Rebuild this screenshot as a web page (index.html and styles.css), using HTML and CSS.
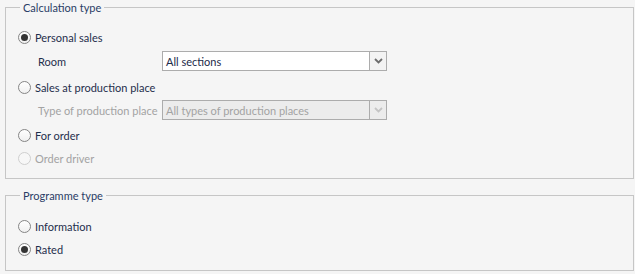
FILE: index.html
```html
<!DOCTYPE html>
<html lang="en">
<head>
    <meta charset="UTF-8">
    <title>Calculation settings</title>
    <link rel="stylesheet" href="styles.css">
</head>
<body>

    <fieldset class="group group-calc">
        <legend>Calculation type</legend>

        <div class="row radio-row">
            <span class="radio checked"></span>
            <span class="label">Personal sales</span>
        </div>
        <div class="row sub-row room-row">
            <span class="sub-label">Room</span>
            <div class="combo">
                <span class="combo-text">All sections</span>
                <span class="combo-btn"><svg width="9" height="6" viewBox="0 0 9 6"><path d="M1 1 L4.5 4.5 L8 1" fill="none" stroke="#6d6d6d" stroke-width="1.8"/></svg></span>
            </div>
        </div>
        <div class="row radio-row">
            <span class="radio"></span>
            <span class="label">Sales at production place</span>
        </div>
        <div class="row sub-row place-row">
            <span class="sub-label disabled">Type of production place</span>
            <div class="combo combo-disabled">
                <span class="combo-text">All types of production places</span>
                <span class="combo-btn"><svg width="9" height="6" viewBox="0 0 9 6"><path d="M1 1 L4.5 4.5 L8 1" fill="none" stroke="#c4c4c4" stroke-width="1.8"/></svg></span>
            </div>
        </div>
        <div class="row radio-row">
            <span class="radio"></span>
            <span class="label">For order</span>
        </div>
        <div class="row radio-row">
            <span class="radio radio-disabled"></span>
            <span class="label disabled">Order driver</span>
        </div>
    </fieldset>

    <fieldset class="group group-prog">
        <legend>Programme type</legend>

        <div class="row radio-row">
            <span class="radio"></span>
            <span class="label">Information</span>
        </div>
        <div class="row radio-row">
            <span class="radio checked"></span>
            <span class="label">Rated</span>
        </div>
    </fieldset>

</body>
</html>
```

FILE: styles.css
```css
body {
    margin: 0;
    padding: 0 1px 0 5px;
    background-color: #f5f5f5;
    font-family: Lato, 'Noto Sans', sans-serif;
    font-size: 11px;
    color: #1f2e4c;
}

.group {
    margin: 0;
    border: 1px solid #c6c6c6;
    padding: 0 0 0 12px;
    display: flex;
    flex-direction: column;
}

.group legend {
    margin-left: 2px;
    padding: 0 3px;
    line-height: 15px;
    color: #2a3d66;
}

.group-calc {
    height: 179px;
    box-sizing: border-box;
    padding-top: 12px;
}

.group-prog {
    margin-top: 9px;
    height: 83px;
    box-sizing: border-box;
    padding-top: 13px;
}

.row {
    display: flex;
    align-items: center;
    white-space: nowrap;
}

.radio-row {
    height: 20px;
    margin-bottom: 3px;
}

.sub-row {
    height: 20px;
    padding-left: 20px;
}

/* the rows in the original dialog aren't evenly spaced */
.room-row {
    margin-top: 1px;
    margin-bottom: 6px;
}

.place-row {
    margin-bottom: 5px;
}

.radio {
    width: 11px;
    height: 11px;
    border: 1px solid #858585;
    border-radius: 50%;
    background: linear-gradient(#ffffff, #f0f0f0);
    position: relative;
    flex: none;
}

.radio.checked::after {
    content: "";
    position: absolute;
    left: 2px;
    top: 2px;
    width: 7px;
    height: 7px;
    border-radius: 50%;
    background-color: #333333;
}

.radio-disabled {
    border-color: #cfcfcf;
    background: #f7f7f7;
}

.label {
    margin-left: 4px;
}

.disabled {
    color: #a3a3a3;
}

.sub-label {
    width: 124px;
}

.combo {
    width: 223px;
    height: 18px;
    border: 1px solid #acacac;
    background-color: #ffffff;
    display: flex;
    align-items: center;
}

.combo-text {
    flex: 1;
    padding-left: 3px;
    color: #1c2a4a;
}

.combo-btn {
    width: 16px;
    height: 18px;
    border-left: 1px solid #acacac;
    background-color: #f3f3f3;
    display: flex;
    align-items: center;
    justify-content: center;
}

.combo-disabled {
    background-color: #ececec;
}

.combo-disabled .combo-text {
    color: #a3a3a3;
}

.combo-disabled .combo-btn {
    background-color: #ececec;
}
```
